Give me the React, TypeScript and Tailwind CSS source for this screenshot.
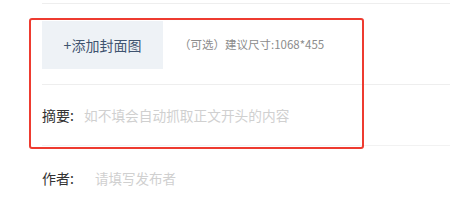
import React from 'react'

const font = { fontFamily: '"Noto Sans CJK SC", "Noto Sans", sans-serif' }

export default function App() {
  return (
    <div className="relative h-[200px] w-[450px] overflow-hidden bg-white" style={font}>
      <div className="ml-[42px] h-[4px] border-b border-[#eeeeee]" />

      {/* cover */}
      <div className="ml-[42px] flex items-start border-b border-[#eeeeee] pt-[17px] pb-[15px]">
        <button className="flex h-[48px] w-[121px] items-center justify-center bg-[#eef2f6] text-[14px] text-[#3f5470]">
          +添加封面图
        </button>
        <span className="ml-[16px] mt-[15px] text-[11.5px] text-[#8c8c8c]">（可选）建议尺寸:1068*455</span>
      </div>

      {/* summary */}
      <div className="ml-[42px] flex h-[61px] items-center border-b border-[#f2f2f2] text-[14px]">
        <span className="w-[42px] text-[#333333]">摘要:</span>
        <span className="text-[13.7px] text-[#d0d0d0]">如不填会自动抓取正文开头的内容</span>
      </div>

      {/* author */}
      <div className="ml-[42px] flex h-[64px] items-center text-[14px]">
        <span className="w-[53px] text-[#333333]">作者:</span>
        <span className="text-[13.5px] text-[#d0d0d0]">请填写发布者</span>
      </div>

      {/* annotation box */}
      <div className="pointer-events-none absolute left-[29px] top-[18px] h-[131px] w-[335px] rounded-[3px] border-2 border-[#ee3b30]" />
    </div>
  )
}
